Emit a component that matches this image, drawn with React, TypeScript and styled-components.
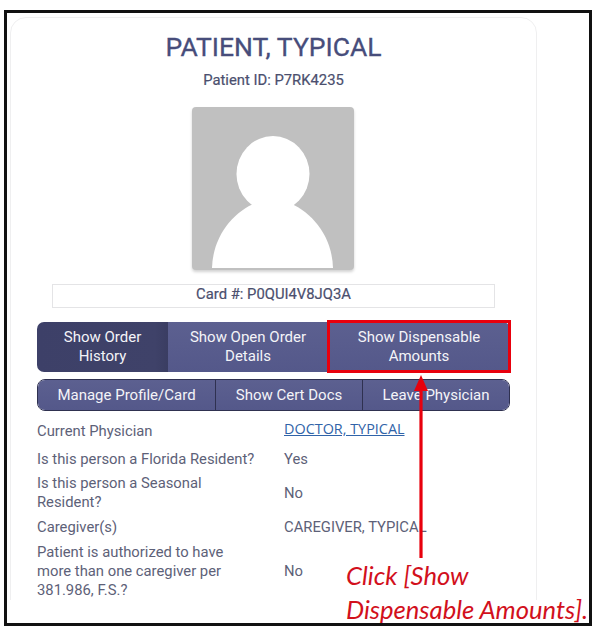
import styled, { createGlobalStyle } from 'styled-components';

const GlobalStyle = createGlobalStyle`
  html, body {
    margin: 0;
    padding: 0;
    background: #fff;
  }
`;

const details = [
  { label: 'Is this person a Florida Resident?', value: 'Yes', height: 28 },
  { label: 'Is this person a Seasonal Resident?', value: 'No', height: 40 },
  { label: 'Caregiver(s)', value: 'CAREGIVER, TYPICAL', height: 28 },
  {
    label: 'Patient is authorized to have more than one caregiver per 381.986, F.S.?',
    value: 'No',
    height: 60,
  },
];

export default function App() {
  return (
    <Page>
      <GlobalStyle />
      <Frame>
        <CardClip>
          <Card>
            <Name>PATIENT, TYPICAL</Name>
            <PatientId>Patient ID: P7RK4235</PatientId>
            <Photo>
              <svg width="162" height="163" viewBox="0 0 162 163">
                <ellipse cx="81" cy="67" rx="36.5" ry="38" fill="#fff" />
                <path d="M20 161C21 128 42 104 66 95H95C119 104 140 128 141 161Z" fill="#fff" />
              </svg>
            </Photo>
            <CardNumber>Card #: P0QUI4V8JQ3A</CardNumber>
            <TabRow>
              <Tab $width={131} $active>
                Show Order
                <br />
                History
              </Tab>
              <Tab $width={160}>
                Show Open Order
                <br />
                Details
              </Tab>
              <Tab $width={182}>
                Show Dispensable
                <br />
                Amounts
              </Tab>
            </TabRow>
            <ActionRow>
              <Action $width={177}>Manage Profile/Card</Action>
              <Action $width={147}>Show Cert Docs</Action>
              <Action $width={147}>Leave Physician</Action>
            </ActionRow>
            <DetailList>
              <DetailRow $height={28}>
                <Label>Current Physician</Label>
                <DoctorLink>DOCTOR, TYPICAL</DoctorLink>
              </DetailRow>
              {details.map(({ label, value, height }) => (
                <DetailRow key={label} $height={height}>
                  <Label>{label}</Label>
                  <div>{value}</div>
                </DetailRow>
              ))}
            </DetailList>
          </Card>
        </CardClip>
      </Frame>
      <Highlight />
      <Arrow width="16" height="184" viewBox="0 0 16 184">
        <path d="M8 14V183" stroke="#e8000d" strokeWidth="3.2" fill="none" />
        <path d="M8 0L15 16H1Z" fill="#e8000d" />
      </Arrow>
      <Callout>
        Click [Show
        <br />
        Dispensable Amounts].
      </Callout>
    </Page>
  );
}

const Page = styled.div`
  position: relative;
  width: 600px;
  height: 633px;
  padding: 10px 0 0 4px;
  box-sizing: border-box;
  overflow: hidden;
  font-family: Roboto, 'Liberation Sans', sans-serif;
`;

const Frame = styled.div`
  width: 588px;
  height: 616px;
  padding: 4px 0 0 3px;
  box-sizing: border-box;
  border: 3px solid #111;
`;

const CardClip = styled.div`
  width: 527px;
  height: 583px;
  overflow: hidden;
`;

const Card = styled.div`
  height: 640px;
  padding: 11px 26px 0;
  box-sizing: border-box;
  display: flex;
  flex-direction: column;
  align-items: center;
  background: #fff;
  border: 1px solid #efeff0;
  border-radius: 16px;
`;

const Name = styled.h1`
  margin: 0;
  font-size: 26.5px;
  line-height: 35px;
  font-weight: 400;
  color: #474d7b;
  -webkit-text-stroke: 0.3px #474d7b;
`;

const PatientId = styled.div`
  margin-top: 6px;
  font-size: 14.8px;
  line-height: 20px;
  font-weight: 400;
  color: #4b4f6e;
  -webkit-text-stroke: 0.2px #4b4f6e;
`;

const Photo = styled.div`
  margin: 17px 1px 0 0;
  width: 162px;
  height: 163px;
  flex: none;
  background: #c0c0c0;
  border-radius: 4px;
  box-shadow: 0 2px 3px rgba(0, 0, 0, 0.18);
  overflow: hidden;

  svg {
    display: block;
  }
`;

const CardNumber = styled.div`
  margin-top: 14px;
  width: 443px;
  height: 24px;
  flex: none;
  box-sizing: border-box;
  border: 1px solid #e4e4e6;
  text-align: center;
  font-size: 14.8px;
  line-height: 19px;
  color: #4b4f6e;
  -webkit-text-stroke: 0.2px #4b4f6e;
`;

const TabRow = styled.div`
  margin-top: 14px;
  align-self: flex-start;
  display: flex;
  height: 50px;
  flex: none;
  border-radius: 7px;
  overflow: hidden;
`;

const Tab = styled.div<{ $width: number; $active?: boolean }>`
  width: ${(p) => p.$width}px;
  display: flex;
  align-items: center;
  justify-content: center;
  text-align: center;
  font-size: 15px;
  line-height: 19px;
  color: #f4f4f8;
  background: ${(p) =>
    p.$active
      ? 'linear-gradient(90deg, #3d4068, #3f4269 90%, #3a3d62)'
      : 'linear-gradient(180deg, #5c6090, #54588a)'};
`;

const ActionRow = styled.div`
  margin-top: 7px;
  align-self: flex-start;
  display: flex;
  height: 32px;
  flex: none;
  box-sizing: border-box;
  border: 1px solid #2f3150;
  border-radius: 8px;
  overflow: hidden;
`;

const Action = styled.div<{ $width: number }>`
  width: ${(p) => p.$width}px;
  box-sizing: border-box;
  display: flex;
  align-items: center;
  justify-content: center;
  font-size: 15px;
  color: #f4f4f8;
  background: linear-gradient(180deg, #5c6090, #54588a);

  & + & {
    border-left: 1px solid #2f3150;
  }
`;

const DetailList = styled.div`
  margin-top: 6px;
  align-self: stretch;
  display: flex;
  flex-direction: column;
  font-size: 14.8px;
  line-height: 19px;
  color: #5d6178;
`;

const DetailRow = styled.div<{ $height: number }>`
  display: grid;
  grid-template-columns: 247px 1fr;
  height: ${(p) => p.$height}px;
  align-items: center;
`;

const Label = styled.div`
  max-width: 220px;
`;

const DoctorLink = styled.a`
  margin-top: -5px;
  font-family: 'Open Sans', sans-serif;
  font-size: 14.4px;
  color: #3063a8;
  text-decoration: underline;
`;

const Highlight = styled.div`
  position: absolute;
  left: 327px;
  top: 320px;
  width: 184px;
  height: 53px;
  box-sizing: border-box;
  border: 3px solid #e8000d;
`;

const Arrow = styled.svg`
  position: absolute;
  left: 413px;
  top: 375px;
`;

const Callout = styled.div`
  position: absolute;
  left: 346px;
  top: 559px;
  font-family: Lato, 'Open Sans', sans-serif;
  font-style: italic;
  font-size: 25.6px;
  line-height: 33.5px;
  white-space: nowrap;
  color: #d2101c;
`;
